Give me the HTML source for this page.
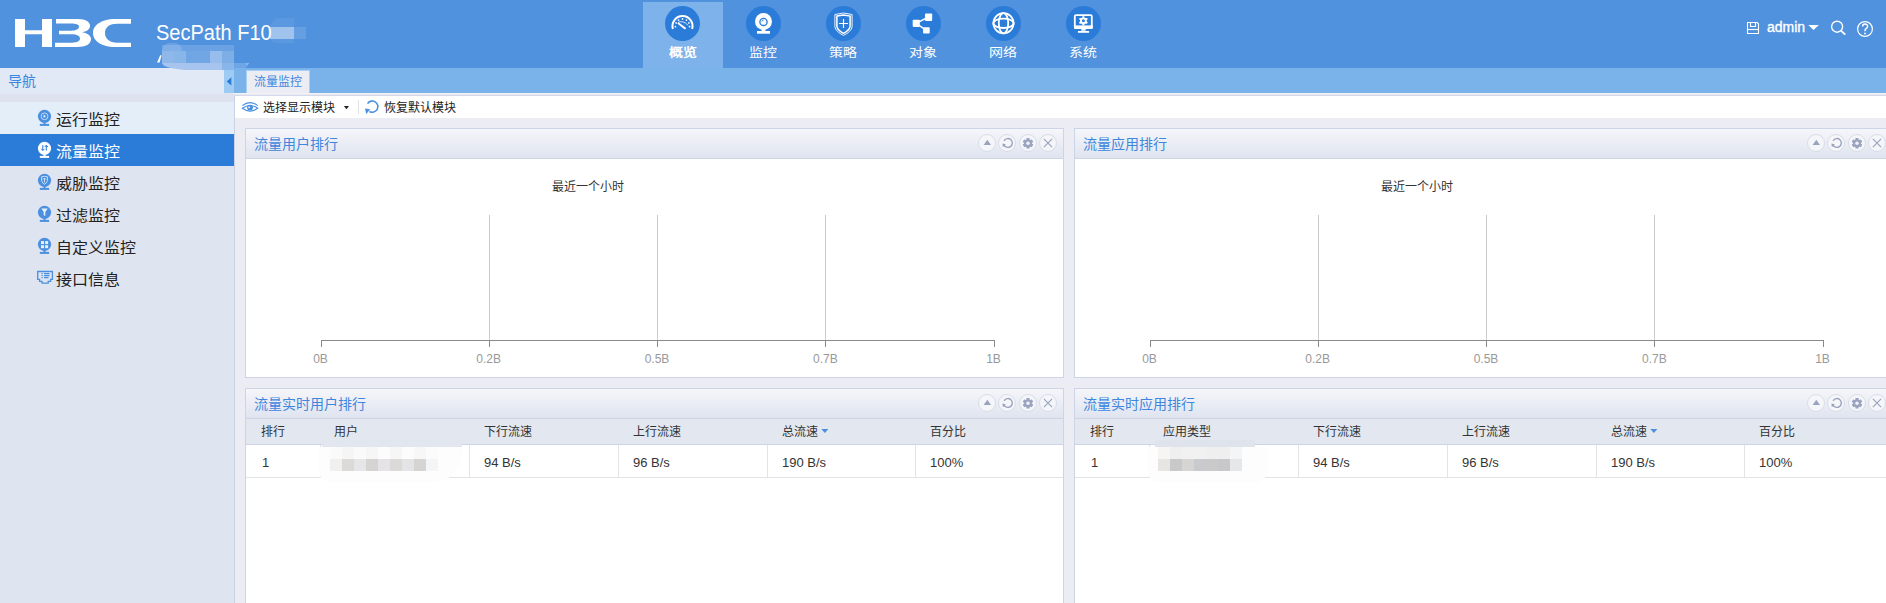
<!DOCTYPE html>
<html lang="zh-CN">
<head>
<meta charset="utf-8">
<style>
*{margin:0;padding:0;box-sizing:border-box}
html,body{width:1886px;height:603px;overflow:hidden;background:#ecedf4;font-family:"Liberation Sans",sans-serif;}
.a{position:absolute}
#hdr{left:0;top:0;width:1886px;height:68px;background:#5092de}
.navbg{left:643px;top:2px;width:80px;height:66px;background:#7db2ea}
.nlab{top:43.5px;width:80px;text-align:center;color:#fff;font-size:14px;line-height:18px;transform:scaleY(0.86);transform-origin:50% 9px}
.circ{width:35px;height:35px;border-radius:50%;background:#2b7bd9;top:6px}
#side{left:0;top:68px;width:234px;height:535px;background:#dfe4f1}
.sb-border{left:234px;top:94px;width:1px;height:509px;background:#cbd1e4}
.item{left:0;width:234px;height:32px}
.itxt{left:56px;font-size:16px;line-height:32px;color:#222;margin-top:2px;transform:scaleY(0.93);transform-origin:0 16px}
.pan{background:#fff;border:1px solid #cdd4e6}
.ph{left:0;top:0;right:0;height:30px;background:linear-gradient(#f5f6fa,#dfe4ef);border-bottom:1px solid #cdd4e6}
.pt{left:8px;top:0;font-size:14px;line-height:30px;color:#3f86de}
.btn{width:18px;height:18px;border-radius:50%;background:#f5f6fa;border:1px solid #d9dde8}
.gl{width:1px;background:#cccccc}
.xl{font-size:12px;color:#999;line-height:14px;width:60px;text-align:center;margin-top:1px}
.th{font-size:12px;color:#333;line-height:25px;margin-top:1px}
.td{font-size:13px;color:#333;line-height:32px;margin-top:2px}
</style>
</head>
<body>
<!-- HEADER -->
<div id="hdr" class="a">
  <svg class="a" style="left:0;top:0" width="140" height="68" viewBox="0 0 140 68">
    <path fill="#fff" d="M15,19 H25 V30.3 H42 V19 H52 V47 H42 V34.2 H25 V47 H15 Z"/>
    <path fill="#fff" d="M56,19 H78 C86,19 90,22 90,26 C90,29.5 86.5,31.5 81.5,32.3 C87,33 91,35.5 91,39 C91,44 86,47 77,47 H55 V42.7 H72 C77.5,42.7 80,41 80,38.6 C80,36 77,34.2 72,34.2 H59 V30.7 H71 C76,30.7 79,29 79,26.5 C79,24.5 76,23.5 71,23.5 H56 Z"/>
    <path fill="#fff" d="M131,19 H114 C104,19 93,24 93,33 C93,42 104,47 114,47 H131 V42.7 H117 C110,42.7 105,39 105,33 C105,27 110,23.8 117,23.8 H131 Z"/>
  </svg>
  <div class="a" style="left:156px;top:20px;font-size:22px;line-height:26px;color:#fff;transform:scaleX(0.91);transform-origin:0 0;white-space:nowrap">SecPath F10</div>
  <!-- mosaic -->
  <div class="a" style="left:270px;top:18px;width:24px;height:25px;border-radius:10px 0 0 6px;background:rgba(255,255,255,.06)"></div>
  <div class="a" style="left:270px;top:27px;width:24px;height:12px;background:rgba(255,255,255,.42)"></div>
  <div class="a" style="left:294px;top:27px;width:12px;height:12px;background:rgba(255,255,255,.12)"></div>
  <svg class="a" style="left:150px;top:50px" width="20" height="16" viewBox="150 50 20 16"><path d="M157,62.5 L159.6,62.5 L161.6,55.2 L160.2,55.2 Z" fill="#fff"/></svg>
  <div class="a" style="left:162px;top:43px;width:20px;height:8px;border-radius:12px 12px 0 0;background:rgba(255,255,255,.15)"></div>
  <div class="a" style="left:162px;top:45px;width:72px;height:6px;background:rgba(255,255,255,.15)"></div>
  <div class="a" style="left:162px;top:51px;width:12px;height:12px;background:rgba(255,255,255,.35)"></div>
  <div class="a" style="left:174px;top:51px;width:12px;height:12px;background:rgba(255,255,255,.33)"></div>
  <div class="a" style="left:186px;top:51px;width:24px;height:12px;background:rgba(255,255,255,.19)"></div>
  <div class="a" style="left:210px;top:51px;width:12px;height:12px;background:rgba(255,255,255,.40)"></div>
  <div class="a" style="left:222px;top:51px;width:12px;height:12px;background:rgba(255,255,255,.26)"></div>

  <div class="a navbg"></div>
  <div class="a circ" style="left:665px"></div>
  <div class="a circ" style="left:746px"></div>
  <div class="a circ" style="left:826px"></div>
  <div class="a circ" style="left:906px"></div>
  <div class="a circ" style="left:986px"></div>
  <div class="a circ" style="left:1066px"></div>
  <div class="a nlab" style="left:643px;font-weight:bold">概览</div>
  <div class="a nlab" style="left:723px">监控</div>
  <div class="a nlab" style="left:803px">策略</div>
  <div class="a nlab" style="left:883px">对象</div>
  <div class="a nlab" style="left:963px">网络</div>
  <div class="a nlab" style="left:1043px">系统</div>

  <svg class="a" style="left:643px;top:0" width="480" height="45" viewBox="643 0 480 45">
    <!-- gauge -->
    <path d="M672.94,28.92 A10,10 0 1 1 692.06,28.92" fill="none" stroke="#fff" stroke-width="2"/>
    <g fill="#fff"><circle cx="675.43" cy="26.62" r="0.85"/><circle cx="676.12" cy="22.89" r="0.85"/><circle cx="678.53" cy="20.11" r="0.85"/><circle cx="682.50" cy="18.90" r="0.85"/><circle cx="686.47" cy="20.11" r="0.85"/><circle cx="688.88" cy="22.89" r="0.85"/><circle cx="689.57" cy="26.62" r="0.85"/>
      <path d="M677.3,23.4 L678.4,22.3 L685.6,27.6 C686.2,28.1 686,29.1 685.2,29.3 C684.8,29.4 684.4,29.2 684.1,28.9 Z"/>
    </g>
    <path d="M678.3,22.4 C680.5,21.2 684.5,21.2 688,25.3" fill="none" stroke="#fff" stroke-width="0.8"/>
    <!-- webcam -->
    <circle cx="763.5" cy="21.5" r="8.5" fill="#fff"/>
    <circle cx="763.5" cy="21.9" r="3.6" fill="none" stroke="#2b7bd9" stroke-width="1.3"/>
    <path d="M762,21.6 A1.6,1.6 0 0 1 763.6,20" fill="none" stroke="#2b7bd9" stroke-width="0.9"/>
    <rect x="761.6" y="29" width="3.8" height="2.5" fill="#fff"/>
    <rect x="757" y="31" width="13" height="2.7" fill="#fff"/>
    <!-- shield -->
    <path d="M834.9,14.5 L843.5,13 L852.1,14.5 L852.1,26.8 Q851.4,31.6 843.5,35.4 Q835.6,31.6 834.9,26.8 Z" fill="none" stroke="#fff" stroke-width="0.9" stroke-linejoin="round"/>
    <path d="M836.9,16.1 L843.5,14.9 L850.1,16.1 L850.1,26.4 Q849.5,30.3 843.5,33.3 Q837.5,30.3 836.9,26.4 Z" fill="none" stroke="#fff" stroke-width="1.5"/>
    <path d="M843.5,19 V28 M839,23.5 H848" stroke="#fff" stroke-width="1.2"/>
    <!-- share -->
    <path d="M916,23.3 L928.5,17 M916,23.3 L926.5,30.4" stroke="#fff" stroke-width="1.4"/>
    <rect x="925" y="13.4" width="7.2" height="7.5" rx="0.8" fill="#fff"/>
    <rect x="912.7" y="19.8" width="7.1" height="7.1" rx="0.8" fill="#fff"/>
    <rect x="923.1" y="27.2" width="6.6" height="6.4" rx="0.8" fill="#fff"/>
    <!-- globe -->
    <g fill="none" stroke="#fff" stroke-width="1.8">
      <circle cx="1003.5" cy="23.3" r="10.1"/>
      <ellipse cx="1003.5" cy="23.3" rx="4.7" ry="10.1"/>
      <ellipse cx="1003.5" cy="23.3" rx="10.1" ry="4.7"/>
    </g>
    <!-- monitor -->
    <rect x="1074.8" y="15.1" width="17" height="13" rx="1.2" fill="none" stroke="#fff" stroke-width="1.8"/>
    <rect x="1074" y="25.4" width="18.8" height="3.3" fill="#fff"/>
    <rect x="1081.3" y="28.5" width="4.4" height="2.2" fill="#fff"/>
    <rect x="1077.9" y="31" width="11.2" height="1.8" fill="#fff"/>
    <g transform="translate(1083.4,20.8)" fill="#fff">
      <circle r="3.4"/>
      <g id="tooth"><rect x="-1" y="-4.6" width="2" height="9.2"/></g>
      <rect x="-1" y="-4.6" width="2" height="9.2" transform="rotate(60)"/>
      <rect x="-1" y="-4.6" width="2" height="9.2" transform="rotate(120)"/>
      <circle r="1.5" fill="#2b7bd9"/>
    </g>
  </svg>

  <!-- right tools -->
  <svg class="a" style="left:1740px;top:10px" width="146" height="40" viewBox="1740 10 146 40">
    <path d="M1747.5,22.5 H1757.2 L1758.5,23.8 V33.5 H1747.5 Z" fill="none" stroke="#fff" stroke-width="1.1"/>
    <path d="M1750.5,22.5 V26.5 H1755.5 V22.5" fill="none" stroke="#fff" stroke-width="1.1"/>
    <path d="M1747.5,29.5 H1758.5" stroke="#fff" stroke-width="1.1"/>
    <path d="M1808.3,25 H1818.8 L1813.55,30 Z" fill="#fff"/>
    <circle cx="1837.1" cy="26.7" r="5.5" fill="none" stroke="#fff" stroke-width="1.4"/>
    <path d="M1840.9,30.6 L1845.3,34.6" stroke="#fff" stroke-width="1.9"/>
    <circle cx="1865" cy="29" r="7.4" fill="none" stroke="#fff" stroke-width="1.2"/>
    <path d="M1862.6,26.6 C1862.6,23.2 1867.6,23.2 1867.6,26.4 C1867.6,28.3 1865,28.5 1865,30.6 V31.2" fill="none" stroke="#fff" stroke-width="1.4"/>
    <circle cx="1865" cy="33.5" r="0.9" fill="#fff"/>
  </svg>
  <div class="a" style="left:1767px;top:17.5px;font-size:14px;line-height:18px;color:#fff;-webkit-text-stroke:0.35px #fff">admin</div>
</div>

<!-- SIDEBAR -->
<div id="side" class="a"></div>
<div class="a" style="left:0;top:68px;width:224px;height:26px;background:#e1e8f6"></div>
<div class="a" style="left:8px;top:68px;font-size:14px;line-height:26px;color:#3a86e0">导航</div>
<div class="a" style="left:224px;top:70px;width:10px;height:23px;background:#9dcbf3"></div>
<div class="a" style="left:0;top:94px;width:234px;height:8px;background:#dde2ee"></div>
<div class="a item" style="top:102px;background:#e4eef8"></div>
<div class="a item" style="top:134px;background:#2b7bd9"></div>
<div class="a itxt" style="top:102px">运行监控</div>
<div class="a itxt" style="top:134px;color:#fff">流量监控</div>
<div class="a itxt" style="top:166px">威胁监控</div>
<div class="a itxt" style="top:198px">过滤监控</div>
<div class="a itxt" style="top:230px">自定义监控</div>
<div class="a itxt" style="top:262px">接口信息</div>
<div class="a sb-border"></div>
<div class="a" style="left:162px;top:63px;width:60px;height:7px;border-radius:0 0 0 30px / 0 0 0 7px;background:#a6c4ee"></div>
<div class="a" style="left:222px;top:63px;width:12px;height:7px;background:#88b6ea"></div>
<div class="a" style="left:234px;top:63px;width:12px;height:6px;background:#6ea5e5"></div>
<svg class="a" style="left:244px;top:62px" width="8" height="8" viewBox="244 62 8 8"><path d="M246,63 L249.5,63 L246.5,66.5 Z" fill="#8cb6ea"/></svg>
<svg class="a" style="left:0;top:68px" width="234" height="230" viewBox="0 68 234 230">
  <path d="M231.4,77.3 V85.6 L226.7,81.45 Z" fill="#2b7bd9"/>
  <defs>
    <g id="cam"><circle cx="44.5" cy="14.3" r="6.6"/><rect x="43.5" y="20" width="2" height="3"/><rect x="39.8" y="21.9" width="9.3" height="2"/></g>
  </defs>
  <g fill="#4a8fe0">
    <use href="#cam" y="102"/>
    <use href="#cam" y="166"/>
    <use href="#cam" y="198"/>
    <use href="#cam" y="230"/>
  </g>
  <use href="#cam" y="134" fill="#fff"/>
  <!-- item1 play -->
  <circle cx="44.5" cy="116.3" r="3.4" fill="none" stroke="#c9dcf6" stroke-width="0.9"/>
  <path d="M43.6,114.6 V118 L46,116.3 Z" fill="#e6effb"/>
  <!-- item2 arrows -->
  <path d="M42.8,145.2 V150.4 M41.2,148.8 L42.8,150.6 L44.4,148.8 M46.3,150.6 V145.4 M44.7,147 L46.3,145.2 L47.9,147" fill="none" stroke="#2b7bd9" stroke-width="1"/>
  <!-- item3 shield -->
  <path d="M41.6,176.8 Q44.5,175.8 47.4,176.8 V180.5 Q47,183 44.5,184.3 Q42,183 41.6,180.5 Z" fill="none" stroke="#d9e6f8" stroke-width="0.9"/>
  <path d="M44.5,178 V182.5 M43,179.5 L44.5,178 L46,179.5" fill="none" stroke="#e6effb" stroke-width="0.8"/>
  <!-- item4 funnel -->
  <path d="M41.3,208.5 H47.7 L45.3,212 V216 L43.7,215.2 V212 Z" fill="#e9f1fc"/>
  <!-- item5 grid -->
  <rect x="41" y="241.1" width="3" height="3" fill="#e9f1fc"/><rect x="45.1" y="241.1" width="3" height="3" fill="#e9f1fc"/>
  <rect x="41" y="245.2" width="3" height="3" fill="#e9f1fc"/><rect x="45.1" y="245.2" width="3" height="3" fill="#e9f1fc"/>
  <!-- item6 interface -->
  <path d="M37.7,271.5 H52.4 V279.4 H50.6 V281.4 H48.2 V283.2 H42 V281.4 H39.6 V279.4 H37.7 Z" fill="none" stroke="#4a8fe0" stroke-width="1.3"/>
  <path d="M41.5,273.6 H42.7 M44,273.6 H49.5 M41.5,275.6 H42.7 M44,275.6 H49.5 M41.5,277.6 H42.7 M44,277.6 H48.5" stroke="#4a8fe0" stroke-width="1.1"/>
</svg>

<!-- TAB BAR -->
<div class="a" style="left:234px;top:68px;width:1652px;height:25px;background:#7ab3ea"></div>
<div class="a" style="left:246px;top:70px;width:64px;height:23px;background:#ecedf4;border:1px solid #a9d0f4;border-bottom:none"></div>
<div class="a" style="left:254px;top:71px;font-size:12px;line-height:22px;color:#3f86de">流量监控</div>
<div class="a" style="left:234px;top:93px;width:1652px;height:3px;background:linear-gradient(#f3f2f5 0,#f3f2f5 33%,#e9eaf2 33%,#e9eaf2 66%,#d3d8ea 66%)"></div>
<div class="a" style="left:235px;top:96px;width:1651px;height:22px;background:#fff"></div>
<div class="a" style="left:263px;top:97px;font-size:12px;line-height:22px;color:#222">选择显示模块</div>
<div class="a" style="left:358px;top:100px;width:1px;height:14px;background:#e3e3e3"></div>
<svg class="a" style="left:236px;top:96px" width="150" height="22" viewBox="236 96 150 22">
  <path d="M242.3,105.6 Q250,99.6 257.7,105.6" fill="none" stroke="#4a8fe0" stroke-width="1.1"/>
  <path d="M242.3,108.3 Q250,102.6 257.7,108.3 Q250,114 242.3,108.3 Z" fill="none" stroke="#4a8fe0" stroke-width="1.1"/>
  <circle cx="250" cy="107.6" r="2.9" fill="#4a8fe0"/>
  <rect x="248.4" y="106.5" width="1.5" height="1.6" fill="#fff"/>
  <path d="M343.9,105.9 H349 L346.45,109.3 Z" fill="#222"/>
  <path d="M367.55,103.63 A5.6,5.6 0 1 1 369.50,111.45" fill="none" stroke="#4a8fe0" stroke-width="1.6"/>
  <path d="M365,108.6 L370.2,109.3 L366.3,113.9 Z" fill="#4a8fe0"/>
</svg>
<div class="a" style="left:384px;top:97px;font-size:12px;line-height:22px;color:#222">恢复默认模块</div>

<!-- PANELS -->
<div class="a pan" style="left:245px;top:128px;width:819px;height:250px"><div class="a ph"><div class="a pt">流量用户排行</div></div></div>
<div class="a pan" style="left:245px;top:388px;width:819px;height:230px"><div class="a ph"><div class="a pt">流量实时用户排行</div></div></div>
<div class="a btn" style="left:978.3px;top:134.1px"></div>
<div class="a btn" style="left:998.4px;top:134.1px"></div>
<div class="a btn" style="left:1019.0px;top:134.1px"></div>
<div class="a btn" style="left:1039.0px;top:134.1px"></div>
<svg class="a" style="left:975px;top:131.1px;overflow:visible" width="90" height="24" viewBox="975 131.1 90 24">
  <path d="M983.6,145.1 H991.0 L987.3,139.8 Z" fill="#9ba4bf"/>
  <path d="M1003.8,144.6 A4.4,4.4 0 1 0 1004.1,140.9" fill="none" stroke="#9ba4bf" stroke-width="1.4"/>
  <path d="M1002.4,143.6 L1005.8,144.4 L1002.8,147.3 Z" fill="#9ba4bf"/>
  <g transform="translate(1028.0,143.4)" fill="#9ba4bf">
    <circle r="3.9"/>
    <rect x="-1.6" y="-5.3" width="3.2" height="10.6" rx="0.6"/>
    <rect x="-1.6" y="-5.3" width="3.2" height="10.6" rx="0.6" transform="rotate(60)"/>
    <rect x="-1.6" y="-5.3" width="3.2" height="10.6" rx="0.6" transform="rotate(120)"/>
    <circle r="1.7" fill="#f2f3f8"/>
  </g>
  <path d="M1043.9,139.0 L1052.1,147.2 M1052.1,139.0 L1043.9,147.2" stroke="#9ba4bf" stroke-width="1.2"/>
</svg><div class="a btn" style="left:978.3px;top:394.1px"></div>
<div class="a btn" style="left:998.4px;top:394.1px"></div>
<div class="a btn" style="left:1019.0px;top:394.1px"></div>
<div class="a btn" style="left:1039.0px;top:394.1px"></div>
<svg class="a" style="left:975px;top:391.1px;overflow:visible" width="90" height="24" viewBox="975 391.1 90 24">
  <path d="M983.6,405.1 H991.0 L987.3,399.8 Z" fill="#9ba4bf"/>
  <path d="M1003.8,404.6 A4.4,4.4 0 1 0 1004.1,400.9" fill="none" stroke="#9ba4bf" stroke-width="1.4"/>
  <path d="M1002.4,403.6 L1005.8,404.4 L1002.8,407.3 Z" fill="#9ba4bf"/>
  <g transform="translate(1028.0,403.4)" fill="#9ba4bf">
    <circle r="3.9"/>
    <rect x="-1.6" y="-5.3" width="3.2" height="10.6" rx="0.6"/>
    <rect x="-1.6" y="-5.3" width="3.2" height="10.6" rx="0.6" transform="rotate(60)"/>
    <rect x="-1.6" y="-5.3" width="3.2" height="10.6" rx="0.6" transform="rotate(120)"/>
    <circle r="1.7" fill="#f2f3f8"/>
  </g>
  <path d="M1043.9,399.0 L1052.1,407.2 M1052.1,399.0 L1043.9,407.2" stroke="#9ba4bf" stroke-width="1.2"/>
</svg><div class="a" style="left:552px;top:179px;font-size:12px;line-height:16px;color:#333">最近一个小时</div>
<svg class="a" style="left:300px;top:200px" width="720" height="160" viewBox="300 200 720 160" shape-rendering="crispEdges">
  <rect x="489" y="215" width="1" height="125" fill="#cccccc"/>
  <rect x="657" y="215" width="1" height="125" fill="#cccccc"/>
  <rect x="825" y="215" width="1" height="125" fill="#cccccc"/>
  <rect x="321" y="340" width="674" height="1" fill="#8a8a8a"/>
  <rect x="321" y="340" width="1" height="7" fill="#8a8a8a"/>
  <rect x="489" y="340" width="1" height="7" fill="#8a8a8a"/>
  <rect x="657" y="340" width="1" height="7" fill="#8a8a8a"/>
  <rect x="825" y="340" width="1" height="7" fill="#8a8a8a"/>
  <rect x="994" y="340" width="1" height="7" fill="#8a8a8a"/>
</svg>
<div class="a xl" style="left:290.5px;top:351px">0B</div>
<div class="a xl" style="left:458.7px;top:351px">0.2B</div>
<div class="a xl" style="left:627.0px;top:351px">0.5B</div>
<div class="a xl" style="left:795.3px;top:351px">0.7B</div>
<div class="a xl" style="left:963.5px;top:351px">1B</div>
<div class="a" style="left:246px;top:419px;width:817px;height:26px;background:#e2e7f0;border-bottom:1px solid #cdd4e6"></div>
<div class="a" style="left:246px;top:477px;width:817px;height:1px;background:#e3e3e3"></div>
<div class="a" style="left:320px;top:445px;width:1px;height:32px;background:#e3e3e3"></div>
<div class="a" style="left:469px;top:445px;width:1px;height:32px;background:#e3e3e3"></div>
<div class="a" style="left:618px;top:445px;width:1px;height:32px;background:#e3e3e3"></div>
<div class="a" style="left:767px;top:445px;width:1px;height:32px;background:#e3e3e3"></div>
<div class="a" style="left:915px;top:445px;width:1px;height:32px;background:#e3e3e3"></div>
<div class="a th" style="left:261px;top:419px">排行</div>
<div class="a th" style="left:334px;top:419px">用户</div>
<div class="a th" style="left:484px;top:419px">下行流速</div>
<div class="a th" style="left:633px;top:419px">上行流速</div>
<div class="a th" style="left:782px;top:419px">总流速</div>
<div class="a th" style="left:930px;top:419px">百分比</div>
<svg class="a" style="left:821px;top:428px" width="8" height="6" viewBox="0 0 8 6"><path d="M0.3,0.9 H7.4 L3.85,5 Z" fill="#4a8fe0"/></svg>
<div class="a td" style="left:262px;top:445px">1</div>
<div class="a td" style="left:484px;top:445px">94 B/s</div>
<div class="a td" style="left:633px;top:445px">96 B/s</div>
<div class="a td" style="left:782px;top:445px">190 B/s</div>
<div class="a td" style="left:930px;top:445px">100%</div>
<div class="a pan" style="left:1074px;top:128px;width:819px;height:250px"><div class="a ph"><div class="a pt">流量应用排行</div></div></div>
<div class="a pan" style="left:1074px;top:388px;width:819px;height:230px"><div class="a ph"><div class="a pt">流量实时应用排行</div></div></div>
<div class="a btn" style="left:1807.3px;top:134.1px"></div>
<div class="a btn" style="left:1827.4px;top:134.1px"></div>
<div class="a btn" style="left:1848.0px;top:134.1px"></div>
<div class="a btn" style="left:1868.0px;top:134.1px"></div>
<svg class="a" style="left:1804px;top:131.1px;overflow:visible" width="90" height="24" viewBox="1804 131.1 90 24">
  <path d="M1812.6,145.1 H1820.0 L1816.3,139.8 Z" fill="#9ba4bf"/>
  <path d="M1832.8,144.6 A4.4,4.4 0 1 0 1833.1,140.9" fill="none" stroke="#9ba4bf" stroke-width="1.4"/>
  <path d="M1831.4,143.6 L1834.8,144.4 L1831.8,147.3 Z" fill="#9ba4bf"/>
  <g transform="translate(1857.0,143.4)" fill="#9ba4bf">
    <circle r="3.9"/>
    <rect x="-1.6" y="-5.3" width="3.2" height="10.6" rx="0.6"/>
    <rect x="-1.6" y="-5.3" width="3.2" height="10.6" rx="0.6" transform="rotate(60)"/>
    <rect x="-1.6" y="-5.3" width="3.2" height="10.6" rx="0.6" transform="rotate(120)"/>
    <circle r="1.7" fill="#f2f3f8"/>
  </g>
  <path d="M1872.9,139.0 L1881.1,147.2 M1881.1,139.0 L1872.9,147.2" stroke="#9ba4bf" stroke-width="1.2"/>
</svg><div class="a btn" style="left:1807.3px;top:394.1px"></div>
<div class="a btn" style="left:1827.4px;top:394.1px"></div>
<div class="a btn" style="left:1848.0px;top:394.1px"></div>
<div class="a btn" style="left:1868.0px;top:394.1px"></div>
<svg class="a" style="left:1804px;top:391.1px;overflow:visible" width="90" height="24" viewBox="1804 391.1 90 24">
  <path d="M1812.6,405.1 H1820.0 L1816.3,399.8 Z" fill="#9ba4bf"/>
  <path d="M1832.8,404.6 A4.4,4.4 0 1 0 1833.1,400.9" fill="none" stroke="#9ba4bf" stroke-width="1.4"/>
  <path d="M1831.4,403.6 L1834.8,404.4 L1831.8,407.3 Z" fill="#9ba4bf"/>
  <g transform="translate(1857.0,403.4)" fill="#9ba4bf">
    <circle r="3.9"/>
    <rect x="-1.6" y="-5.3" width="3.2" height="10.6" rx="0.6"/>
    <rect x="-1.6" y="-5.3" width="3.2" height="10.6" rx="0.6" transform="rotate(60)"/>
    <rect x="-1.6" y="-5.3" width="3.2" height="10.6" rx="0.6" transform="rotate(120)"/>
    <circle r="1.7" fill="#f2f3f8"/>
  </g>
  <path d="M1872.9,399.0 L1881.1,407.2 M1881.1,399.0 L1872.9,407.2" stroke="#9ba4bf" stroke-width="1.2"/>
</svg><div class="a" style="left:1381px;top:179px;font-size:12px;line-height:16px;color:#333">最近一个小时</div>
<svg class="a" style="left:1129px;top:200px" width="720" height="160" viewBox="1129 200 720 160" shape-rendering="crispEdges">
  <rect x="1318" y="215" width="1" height="125" fill="#cccccc"/>
  <rect x="1486" y="215" width="1" height="125" fill="#cccccc"/>
  <rect x="1654" y="215" width="1" height="125" fill="#cccccc"/>
  <rect x="1150" y="340" width="674" height="1" fill="#8a8a8a"/>
  <rect x="1150" y="340" width="1" height="7" fill="#8a8a8a"/>
  <rect x="1318" y="340" width="1" height="7" fill="#8a8a8a"/>
  <rect x="1486" y="340" width="1" height="7" fill="#8a8a8a"/>
  <rect x="1654" y="340" width="1" height="7" fill="#8a8a8a"/>
  <rect x="1823" y="340" width="1" height="7" fill="#8a8a8a"/>
</svg>
<div class="a xl" style="left:1119.5px;top:351px">0B</div>
<div class="a xl" style="left:1287.7px;top:351px">0.2B</div>
<div class="a xl" style="left:1456.0px;top:351px">0.5B</div>
<div class="a xl" style="left:1624.3px;top:351px">0.7B</div>
<div class="a xl" style="left:1792.5px;top:351px">1B</div>
<div class="a" style="left:1075px;top:419px;width:817px;height:26px;background:#e2e7f0;border-bottom:1px solid #cdd4e6"></div>
<div class="a" style="left:1075px;top:477px;width:817px;height:1px;background:#e3e3e3"></div>
<div class="a" style="left:1149px;top:445px;width:1px;height:32px;background:#e3e3e3"></div>
<div class="a" style="left:1298px;top:445px;width:1px;height:32px;background:#e3e3e3"></div>
<div class="a" style="left:1447px;top:445px;width:1px;height:32px;background:#e3e3e3"></div>
<div class="a" style="left:1596px;top:445px;width:1px;height:32px;background:#e3e3e3"></div>
<div class="a" style="left:1744px;top:445px;width:1px;height:32px;background:#e3e3e3"></div>
<div class="a th" style="left:1090px;top:419px">排行</div>
<div class="a th" style="left:1163px;top:419px">应用类型</div>
<div class="a th" style="left:1313px;top:419px">下行流速</div>
<div class="a th" style="left:1462px;top:419px">上行流速</div>
<div class="a th" style="left:1611px;top:419px">总流速</div>
<div class="a th" style="left:1759px;top:419px">百分比</div>
<svg class="a" style="left:1650px;top:428px" width="8" height="6" viewBox="0 0 8 6"><path d="M0.3,0.9 H7.4 L3.85,5 Z" fill="#4a8fe0"/></svg>
<div class="a td" style="left:1091px;top:445px">1</div>
<div class="a td" style="left:1313px;top:445px">94 B/s</div>
<div class="a td" style="left:1462px;top:445px">96 B/s</div>
<div class="a td" style="left:1611px;top:445px">190 B/s</div>
<div class="a td" style="left:1759px;top:445px">100%</div>
<div class="a" style="left:318px;top:447px;width:144px;height:36px;border-radius:0 0 30px 14px;background:#fdfdfd"></div>
<div class="a" style="left:322px;top:440px;width:140px;height:7px;background:#e2e6ef"></div>
<div class="a" style="left:330px;top:459px;width:12px;height:12px;background:#f0f0f0"></div>
<div class="a" style="left:330px;top:447px;width:12px;height:12px;background:#fafafa"></div>
<div class="a" style="left:342px;top:459px;width:12px;height:12px;background:#dcdad8"></div>
<div class="a" style="left:342px;top:447px;width:12px;height:12px;background:#f5f5f5"></div>
<div class="a" style="left:354px;top:459px;width:12px;height:12px;background:#e6e6e8"></div>
<div class="a" style="left:354px;top:447px;width:12px;height:12px;background:#fafafa"></div>
<div class="a" style="left:366px;top:459px;width:12px;height:12px;background:#d6d4d2"></div>
<div class="a" style="left:366px;top:447px;width:12px;height:12px;background:#f6f6f6"></div>
<div class="a" style="left:378px;top:459px;width:12px;height:12px;background:#e4e4e6"></div>
<div class="a" style="left:378px;top:447px;width:12px;height:12px;background:#fbfcfb"></div>
<div class="a" style="left:390px;top:459px;width:12px;height:12px;background:#dcdad8"></div>
<div class="a" style="left:390px;top:447px;width:12px;height:12px;background:#f6f6f6"></div>
<div class="a" style="left:402px;top:459px;width:12px;height:12px;background:#e4e4e6"></div>
<div class="a" style="left:402px;top:447px;width:12px;height:12px;background:#fbfcfb"></div>
<div class="a" style="left:414px;top:459px;width:12px;height:12px;background:#d6d4d2"></div>
<div class="a" style="left:414px;top:447px;width:12px;height:12px;background:#f7f7f7"></div>
<div class="a" style="left:426px;top:459px;width:12px;height:12px;background:#f4f5f7"></div>
<div class="a" style="left:426px;top:447px;width:12px;height:12px;background:#fbfbfb"></div>
<div class="a" style="left:1147px;top:447px;width:121px;height:36px;border-radius:0 0 14px 14px;background:#fdfdfd"></div>
<div class="a" style="left:1155px;top:440px;width:100px;height:7px;background:#dfe3ec"></div>
<div class="a" style="left:1158px;top:459px;width:12px;height:12px;background:#e6e5e2"></div>
<div class="a" style="left:1158px;top:447px;width:12px;height:12px;background:#f6f5f4"></div>
<div class="a" style="left:1170px;top:459px;width:12px;height:12px;background:#c9c9c9"></div>
<div class="a" style="left:1170px;top:447px;width:12px;height:12px;background:#efefef"></div>
<div class="a" style="left:1182px;top:459px;width:12px;height:12px;background:#d6d5d3"></div>
<div class="a" style="left:1182px;top:447px;width:12px;height:12px;background:#f1f1f1"></div>
<div class="a" style="left:1194px;top:459px;width:12px;height:12px;background:#c8cacd"></div>
<div class="a" style="left:1194px;top:447px;width:12px;height:12px;background:#f1f1f1"></div>
<div class="a" style="left:1206px;top:459px;width:12px;height:12px;background:#cacacb"></div>
<div class="a" style="left:1206px;top:447px;width:12px;height:12px;background:#efefef"></div>
<div class="a" style="left:1218px;top:459px;width:12px;height:12px;background:#c8c8ca"></div>
<div class="a" style="left:1218px;top:447px;width:12px;height:12px;background:#efefef"></div>
<div class="a" style="left:1230px;top:459px;width:12px;height:12px;background:#e6e7e9"></div>
<div class="a" style="left:1230px;top:447px;width:12px;height:12px;background:#f4f5f7"></div>
</body>
</html>
